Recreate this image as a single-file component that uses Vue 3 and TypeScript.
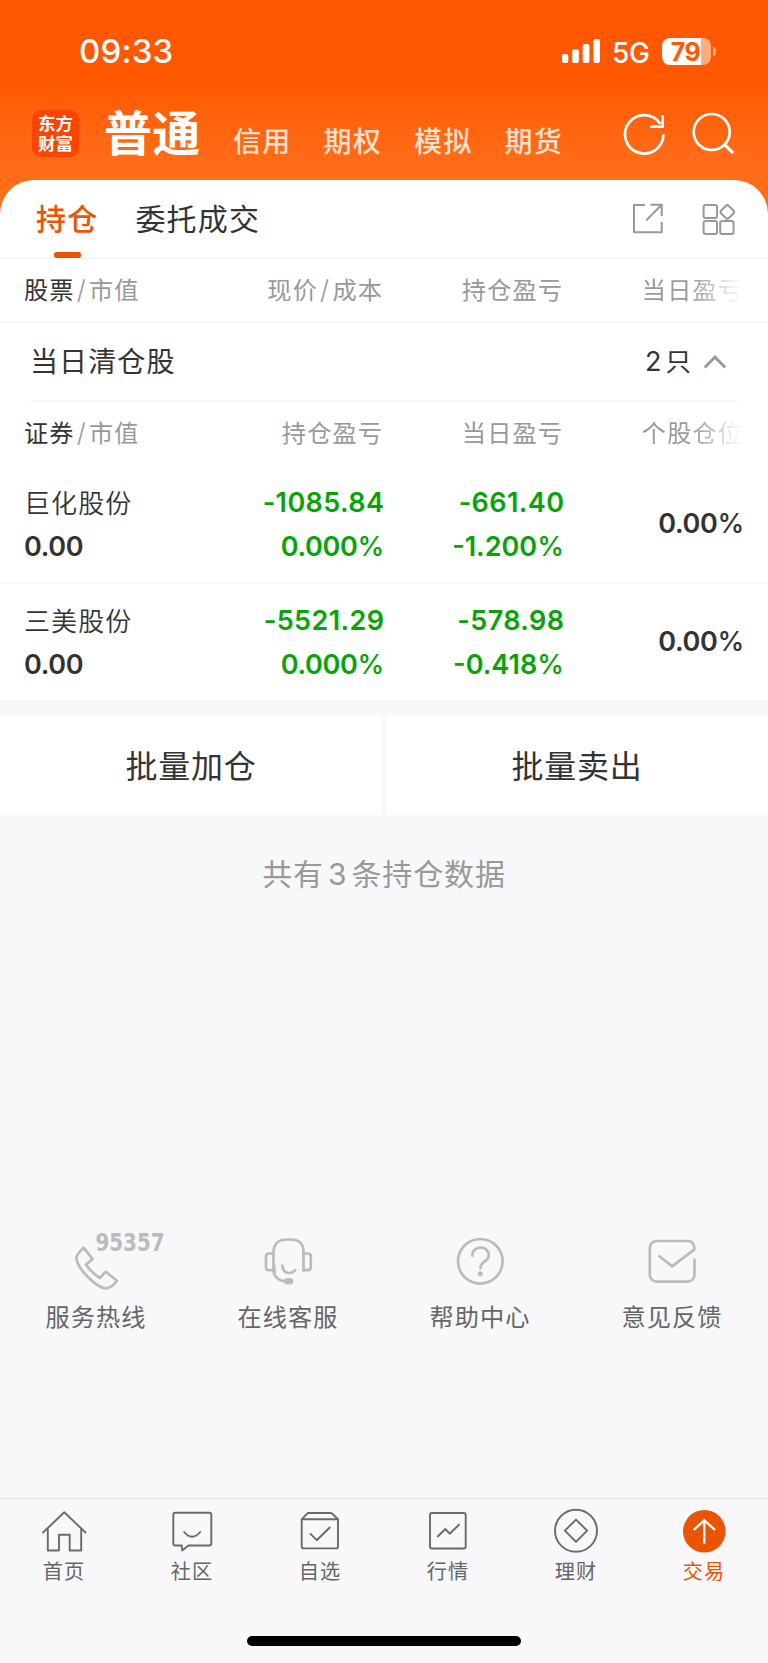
<script setup lang="ts">
interface Holding {
  name: string
  value: string
  total: string
  totalRate: string
  day: string
  dayRate: string
  share: string
}

interface NavItem {
  label: string
  paths: string[]
  active?: boolean
}

const markets: string[] = ['信用', '期权', '模拟', '期货']

const holdings: Holding[] = [
  { name: '巨化股份', value: '0.00', total: '-1085.84', totalRate: '0.000', day: '-661.40', dayRate: '-1.200', share: '0.00' },
  { name: '三美股份', value: '0.00', total: '-5521.29', totalRate: '0.000', day: '-578.98', dayRate: '-0.418', share: '0.00' },
]

const navItems: NavItem[] = [
  { label: '首页', paths: ['M42.5 32 64.3 11.3 86 32', 'M47.8 28V49.5H59V33.7H69.7V49.5H81.2V28'] },
  {
    label: '社区',
    paths: ['M47 11.8H81.3a2 2 0 0 1 2 2V42.5a2 2 0 0 1-2 2H60.5L54.2 49.5 53.7 44.5H47.3a2 2 0 0 1-2-2V13.8a2 2 0 0 1 2-2Z', 'M55.7 30.5Q64 41 72.7 30.5'],
  },
  {
    label: '自选',
    paths: ['M45.7 18.3 50.9 12.8Q51.6 12 52.6 12H74.6Q75.6 12 76.3 12.8L82 18.3V45.4a2 2 0 0 1-2 2H47.7a2 2 0 0 1-2-2Z', 'M45.7 18.3H82', 'M54 32.3 60.7 39.2 74.3 26'],
  },
  {
    label: '行情',
    paths: ['M48 12H79.7a2 2 0 0 1 2 2V45.5a2 2 0 0 1-2 2H48a2 2 0 0 1-2-2V14a2 2 0 0 1 2-2Z', 'M53.3 36 61.3 28 65.7 32.7 75.5 23.3'],
  },
  {
    label: '理财',
    paths: ['M43 29.7a21 21 0 1 0 42 0a21 21 0 1 0-42 0Z', 'M64 18.6 75.1 29.7 64 40.8 52.9 29.7Z'],
  },
  { label: '交易', paths: ['M64.3 42.7V19.6', 'M53.7 29 64.3 19.4 75 29'], active: true },
]
</script>

<template>
  <div class="screen">
    <header class="top">
      <div class="status">
        <span class="clock">09:33</span>
        <svg class="signal" width="38" height="24" viewBox="0 0 38 24" fill="#fff">
          <rect x="0" y="15" width="6.3" height="9" rx="2" />
          <rect x="10.2" y="10.3" width="6.7" height="13.7" rx="2" />
          <rect x="20.7" y="5" width="6.7" height="19" rx="2" />
          <rect x="31.2" y="0" width="6.7" height="24" rx="2" />
        </svg>
        <span class="network">5G</span>
        <div class="battery"><span>79</span></div>
        <i class="battery-tip"></i>
      </div>
      <div class="account">
        <div class="logo"><span>东方</span><span>财富</span></div>
        <b class="current">普通</b>
        <nav class="markets">
          <span v-for="m in markets" :key="m">{{ m }}</span>
        </nav>
        <svg class="tools" width="120" height="50" viewBox="620 108 120 50" fill="none" stroke="#fff" stroke-width="2.7">
          <path d="M663.4 134.6A19.2 19.2 0 1 1 660.4 124" />
          <path d="M662.6 115V126.7H650.3" />
          <circle cx="711.7" cy="132" r="18" />
          <path d="M724.5 144.3 733 153" stroke-width="3.2" />
        </svg>
      </div>
    </header>

    <main class="card">
      <div class="tabs">
        <span class="tab on">持仓</span>
        <span class="tab">委托成交</span>
        <svg class="tab-icons" width="106" height="34" viewBox="631 202 106 34" fill="none" stroke="#999" stroke-width="2" stroke-linejoin="round">
          <path d="M645 205H634V232.3H661.7V222" />
          <path d="M650.5 204.8H661.7V216M661.5 205 646.3 220.3" />
          <rect x="703.6" y="205" width="13.4" height="13" rx="2" />
          <rect x="703.6" y="221" width="13.4" height="13" rx="2" />
          <rect x="720.2" y="221" width="13.4" height="13" rx="2" />
          <rect x="721.9" y="206.6" width="10.8" height="10.8" rx="2.2" transform="rotate(45 727.3 212)" />
        </svg>
      </div>

      <div class="grid heads first">
        <span class="lead"><em>股票</em><i>/</i>市值</span>
        <span>现价<i>/</i>成本</span>
        <span>持仓盈亏</span>
        <span class="fade">当日盈亏</span>
      </div>

      <div class="cleared">
        <span class="cleared-title">当日清仓股</span>
        <span class="count"><b>2</b>只</span>
        <svg width="24" height="16" viewBox="0 0 24 16" fill="none" stroke="#999" stroke-width="2.9">
          <path d="M1.8 13.5 12 3 22.2 13.5" />
        </svg>
      </div>

      <div class="grid heads second">
        <span class="lead"><em>证券</em><i>/</i>市值</span>
        <span>持仓盈亏</span>
        <span>当日盈亏</span>
        <span class="fade">个股仓位</span>
      </div>

      <div v-for="h in holdings" :key="h.name" class="grid holding">
        <div class="pair lead"><span class="name">{{ h.name }}</span><span class="tight">{{ h.value }}</span></div>
        <div class="pair green"><span class="wide">{{ h.total }}</span><span class="tight">{{ h.totalRate }}<small>%</small></span></div>
        <div class="pair green"><span class="wide">{{ h.day }}</span><span>{{ h.dayRate }}<small>%</small></span></div>
        <div class="pair share"><span class="tight">{{ h.share }}<small>%</small></span></div>
      </div>
    </main>

    <div class="batch">
      <button>批量加仓</button>
      <button>批量卖出</button>
    </div>
    <p class="summary">共有<b>3</b>条持仓数据</p>

    <section class="services">
      <div class="service">
        <svg width="192" height="70" viewBox="0 1225 192 70">
          <path d="M83.5 1247.6 92.6 1259 86 1264.6Q91.5 1273 100 1278L105.8 1271.7 117 1280.8Q111.5 1288.2 106 1288.4C96 1288 77 1268 76.3 1258Q76.7 1254.5 83.5 1247.6Z" />
          <text x="95.5" y="1251.3" textLength="69" lengthAdjust="spacingAndGlyphs">95357</text>
        </svg>
        <span>服务热线</span>
      </div>
      <div class="service">
        <svg width="192" height="70" viewBox="192 1225 192 70">
          <path d="M273.5 1270.5V1252Q274 1239.5 287 1239.5H290.5Q303.5 1239.5 303.5 1252V1270.5" />
          <path d="M273.5 1253.5H269Q266 1253.5 266 1256.5V1267Q266 1270.2 269 1270.2H273.5C273.8 1277 279 1281 286 1281.3" />
          <path d="M303.5 1253.5H307.5Q310.8 1253.5 310.8 1256.5V1267Q310.8 1270.2 307.5 1270.2H303.5" />
          <path d="M274.3 1266Q274 1270 275 1272" />
          <path d="M282.3 1265.7Q283 1273 289.2 1273Q293 1273 295.3 1270" />
          <rect x="284.3" y="1278" width="9" height="6.6" rx="3.3" class="solid" />
        </svg>
        <span>在线客服</span>
      </div>
      <div class="service">
        <svg width="192" height="70" viewBox="384 1225 192 70">
          <circle cx="480.3" cy="1261.3" r="22.3" />
          <path d="M472.4 1255.8C472.4 1244.8 488.8 1244.8 488.8 1255.5C488.8 1261.5 480.5 1261 480.5 1268.2" />
          <circle cx="480.3" cy="1273.7" r="2.5" class="solid" />
        </svg>
        <span>帮助中心</span>
      </div>
      <div class="service">
        <svg width="192" height="70" viewBox="576 1225 192 70">
          <path d="M694.5 1259.5V1274.7a7 7 0 0 1-7 7H656.8a7 7 0 0 1-7-7V1248a7 7 0 0 1 7-7H687.5Q694.5 1241 694.5 1249.3L672.1 1266.3 659.3 1256.2" />
        </svg>
        <span>意见反馈</span>
      </div>
    </section>

    <footer class="navbar">
      <a v-for="item in navItems" :key="item.label" :class="{ active: item.active }">
        <svg width="128" height="60" viewBox="0 0 128 60">
          <circle v-if="item.active" cx="64.3" cy="30.3" r="21.3" class="disc" />
          <path v-for="d in item.paths" :key="d" :d="d" />
        </svg>
        <span>{{ item.label }}</span>
      </a>
      <div class="home-bar"></div>
    </footer>
  </div>
</template>

<style>
body {
  margin: 0;
}
</style>

<style scoped>
.screen {
  width: 768px;
  height: 1663px;
  overflow: hidden;
  display: flex;
  flex-direction: column;
  background: #f7f8fa;
  color: #333;
  font-family: Inter, "Noto Sans CJK SC", sans-serif;
}
i,
em {
  font-style: normal;
}
.top {
  flex: none;
  height: 220px;
  margin-bottom: -40.5px;
  background: linear-gradient(#ff5800 0, #ff5800 75px, #ff6c18 160px, #ff6e1a 220px);
  color: #fff;
}
.status {
  height: 100px;
  box-sizing: border-box;
  display: flex;
  align-items: center;
  padding: 2px 0 0 79px;
}
.clock {
  width: 483px;
  font-size: 33px;
  font-weight: 500;
  line-height: 40px;
  letter-spacing: 0.2px;
}
.network {
  width: 49px;
  margin-left: 12px;
  font-size: 28px;
  font-weight: 450;
  line-height: 34px;
  padding-top: 3px;
  box-sizing: border-box;
  letter-spacing: -0.3px;
}
.battery {
  width: 49px;
  height: 27px;
  margin-left: 1px;
  border-radius: 8px;
  background: linear-gradient(90deg, #fff 39px, #ffac80 39px);
  color: #ff5800;
  font-size: 25px;
  font-weight: 700;
  line-height: 28px;
  text-align: center;
  letter-spacing: -0.5px;
}
.battery span {
  margin-right: 2px;
}
.battery-tip {
  width: 3px;
  height: 9px;
  margin: 1px 0 0 2px;
  border-radius: 0 4px 4px 0;
  background: #ffac80;
}
.account {
  height: 80px;
  display: flex;
  align-items: flex-start;
  padding-left: 32px;
}
.logo {
  width: 47px;
  height: 47px;
  margin-top: 10px;
  padding-top: 4px;
  box-sizing: border-box;
  border-radius: 9px;
  background: #ff4400;
  display: flex;
  flex-direction: column;
  align-items: center;
  font-size: 17.5px;
  font-weight: 700;
  line-height: 20px;
}
.current {
  width: 129px;
  margin-left: 25px;
  font-size: 48px;
  line-height: 60px;
  margin-top: 4px;
  letter-spacing: 0.3px;
}
.markets {
  display: flex;
  width: 387px;
  margin-top: 22px;
  font-size: 28px;
  font-weight: 500;
  line-height: 40px;
  color: #ffe0cf;
}
.markets span {
  width: 90.5px;
  letter-spacing: 1.2px;
}
.tools {
  margin-top: 8px;
}
.card {
  flex: none;
  height: 520.5px;
  background: #fff;
  border-radius: 34px 34px 0 0;
}
.tabs {
  height: 79.5px;
  box-sizing: border-box;
  display: flex;
  align-items: center;
  padding: 0 31px 0 36px;
  border-bottom: 2px solid #f6f6f6;
  font-size: 30px;
  letter-spacing: 1.2px;
}
.tab {
  height: 77px;
  line-height: 79px;
  margin-right: 37px;
}
.tab.on {
  position: relative;
  color: #ea5504;
  font-weight: 500;
}
.tab.on::after {
  content: "";
  position: absolute;
  left: 17.5px;
  bottom: -1px;
  width: 27.5px;
  height: 6px;
  border-radius: 2.5px;
  background: #ea5504;
}
.tab-icons {
  margin: 1px 0 0 auto;
}
.grid {
  display: grid;
  grid-template-columns: 179px repeat(3, 180px);
  padding: 0 24px 0 24px;
  text-align: right;
}
.heads {
  font-size: 24.2px;
  letter-spacing: 1.1px;
  color: #999;
}
.heads i {
  display: inline-block;
  width: 14.5px;
  text-align: center;
  font-size: 26px;
  line-height: 30px;
  font-weight: 300;
}
.heads em {
  color: #333;
}
.first {
  height: 62px;
  line-height: 64px;
  border-bottom: 2px solid #f8f8f8;
}
.second {
  height: 64px;
  line-height: 64px;
}
.lead {
  text-align: left;
}
.fade {
  -webkit-mask-image: linear-gradient(90deg, #000 128px, rgba(0, 0, 0, 0.1) 172px);
  mask-image: linear-gradient(90deg, #000 128px, rgba(0, 0, 0, 0.1) 172px);
}
.cleared {
  height: 79px;
  box-sizing: border-box;
  margin: 0 30px;
  border-bottom: 2px solid #f6f6f6;
  display: flex;
  align-items: center;
}
.cleared-title {
  flex: 1;
  font-size: 28px;
  letter-spacing: 1.1px;
  line-height: 76px;
}
.cleared svg {
  margin: 1px 11px 0 12px;
}
.count {
  font-size: 25.5px;
  margin-top: -4px;
}
.count b {
  font-size: 27px;
  font-weight: 400;
  margin-right: 4px;
}
.holding {
  height: 118px;
  box-sizing: border-box;
  border-bottom: 2px solid #f7f7f8;
}
.pair {
  display: flex;
  flex-direction: column;
  justify-content: center;
  margin-right: -1px;
  padding-top: 2px;
  font-size: 27px;
  font-weight: 600;
  line-height: 44px;
}
.pair.share {
  padding-top: 0;
}
.pair small {
  font-size: 27px;
  font-weight: 500;
}
.wide {
  letter-spacing: 0.4px;
  margin-right: -0.4px;
}
.tight {
  letter-spacing: -0.3px;
}
.name {
  position: relative;
  top: 1px;
  font-size: 26px;
  font-weight: 350;
  letter-spacing: 1.1px;
}
.green {
  color: #07a307;
}
.batch {
  display: flex;
  gap: 4px;
  margin-top: 16px;
}
.batch button {
  flex: 1;
  height: 99px;
  padding: 0;
  border: 0;
  background: #fff;
  color: #333;
  font: 400 32px/101px Inter, "Noto Sans CJK SC", sans-serif;
  letter-spacing: 0.7px;
}
.summary {
  margin: 39px 0 0;
  text-align: center;
  font-size: 30px;
  line-height: 40px;
  letter-spacing: 0.9px;
  color: #999;
}
.summary b {
  font-weight: 400;
  margin: 0 4px;
}
.services {
  display: grid;
  grid-template-columns: repeat(4, 1fr);
  margin-top: 331px;
}
.service {
  display: flex;
  flex-direction: column;
  align-items: center;
  font-size: 24.2px;
  letter-spacing: 1.1px;
  line-height: 40px;
  color: #666;
}
.service span {
  margin-top: 3px;
}
.service svg {
  fill: none;
  stroke: #bbb;
  stroke-width: 2.7px;
  stroke-linejoin: round;
  stroke-linecap: round;
}
.service text {
  fill: #bbb;
  stroke: none;
  font: 700 24px "DejaVu Sans Condensed", "DejaVu Sans", sans-serif;
  letter-spacing: 0;
}
.service .solid {
  fill: #bbb;
  stroke: none;
}
.navbar {
  flex: none;
  height: 165px;
  box-sizing: border-box;
  margin-top: auto;
  border-top: 1px solid #e0e1e3;
  background: #f8f8fa;
  display: grid;
  grid-template-columns: repeat(6, 128px);
  grid-template-rows: 137px 10px;
  justify-items: center;
}
.navbar a {
  display: flex;
  flex-direction: column;
  align-items: center;
  font-size: 20.2px;
  letter-spacing: 1px;
  line-height: 24px;
  color: #666;
}
.navbar svg {
  margin: 1.5px 0 -0.5px;
  fill: none;
  stroke: #6a6a6a;
  stroke-width: 1.9px;
  stroke-linejoin: round;
}
.navbar a.active {
  color: #ea5504;
}
.navbar .active svg {
  stroke: #fff;
  stroke-width: 2.3px;
  stroke-linejoin: miter;
}
.navbar .disc {
  fill: #ea5504;
  stroke: none;
}
.home-bar {
  grid-column: 1 / -1;
  width: 274px;
  height: 10px;
  border-radius: 5px;
  background: #000;
}
</style>
